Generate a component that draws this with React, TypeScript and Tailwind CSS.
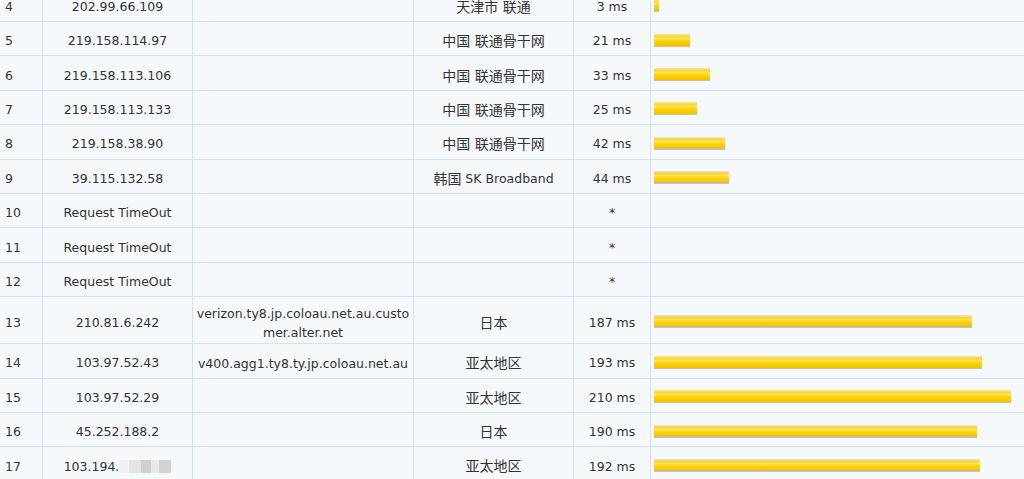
import React from "react";

type Seg = { t: string; cjk?: boolean };
type Row = {
  n: number;
  ip: string;
  blur?: boolean;
  host?: string;
  loc: Seg[];
  ms: number | null;
  tall?: boolean;
};

const rows: Row[] = [
  { n: 4, ip: "202.99.66.109", loc: [{ t: "天津市 联通", cjk: true }], ms: 3 },
  { n: 5, ip: "219.158.114.97", loc: [{ t: "中国 联通骨干网", cjk: true }], ms: 21 },
  { n: 6, ip: "219.158.113.106", loc: [{ t: "中国 联通骨干网", cjk: true }], ms: 33 },
  { n: 7, ip: "219.158.113.133", loc: [{ t: "中国 联通骨干网", cjk: true }], ms: 25 },
  { n: 8, ip: "219.158.38.90", loc: [{ t: "中国 联通骨干网", cjk: true }], ms: 42 },
  { n: 9, ip: "39.115.132.58", loc: [{ t: "韩国", cjk: true }, { t: " SK Broadband" }], ms: 44 },
  { n: 10, ip: "Request TimeOut", loc: [], ms: null },
  { n: 11, ip: "Request TimeOut", loc: [], ms: null },
  { n: 12, ip: "Request TimeOut", loc: [], ms: null },
  {
    n: 13,
    ip: "210.81.6.242",
    host: "verizon.ty8.jp.coloau.net.au.customer.alter.net",
    loc: [{ t: "日本", cjk: true }],
    ms: 187,
    tall: true,
  },
  {
    n: 14,
    ip: "103.97.52.43",
    host: "v400.agg1.ty8.ty.jp.coloau.net.au",
    loc: [{ t: "亚太地区", cjk: true }],
    ms: 193,
  },
  { n: 15, ip: "103.97.52.29", loc: [{ t: "亚太地区", cjk: true }], ms: 210 },
  { n: 16, ip: "45.252.188.2", loc: [{ t: "日本", cjk: true }], ms: 190 },
  { n: 17, ip: "103.194.", blur: true, loc: [{ t: "亚太地区", cjk: true }], ms: 192 },
];

function Mosaic() {
  return (
    <span className="inline-flex h-[13px] align-middle">
      <span className="w-[10px] bg-[#f1f1f1]" />
      <span className="w-[12px] bg-[#e4e4e4]" />
      <span className="w-[10px] bg-[#cfcfcf]" />
      <span className="w-[8px] bg-[#e8e8e8]" />
      <span className="w-[12px] bg-[#d2d2d2]" />
    </span>
  );
}

function Bar({ ms }: { ms: number }) {
  return (
    <div
      className="h-[13px] bg-[linear-gradient(to_bottom,#ffe788_0%,#ffd52a_20%,#ffe35c_35%,#ffd000_55%,#f8c600_82%,#bdb59c_84%,#cbc6b4_100%)]"
      style={{ width: `${Math.round(ms * 1.7)}px` }}
    />
  );
}

export default function App() {
  return (
    <div
      className="w-[1024px] h-[479px] overflow-hidden bg-[#f5f9fc] text-[#333] text-[12.5px]"
      style={{ fontFamily: '"DejaVu Sans", "Noto Sans CJK SC", sans-serif' }}
    >
      <div className="-mt-[12.4px] w-[1100px]">
        {rows.map((r) => (
          <div
            key={r.n}
            className={`flex border-b border-[#d5e1ef] box-border ${
              r.tall ? "h-[47px]" : "h-[34.4px]"
            }`}
          >
            <div className="w-[43px] shrink-0 border-r border-[#d5e1ef] flex items-center pl-[5px] pt-[6px]">
              {r.n}
            </div>
            <div className="w-[150px] shrink-0 border-r border-[#d5e1ef] flex items-center justify-center pt-[6px] whitespace-nowrap">
              {r.ip}
              {r.blur && <Mosaic />}
            </div>
            <div className="w-[221px] shrink-0 border-r border-[#d5e1ef] flex items-center justify-center px-[2px] pt-[6px] text-center break-all leading-[19px]">
              {r.host ?? ""}
            </div>
            <div className="w-[160px] shrink-0 border-r border-[#d5e1ef] flex items-center justify-center pt-[6px] whitespace-nowrap">
              {r.loc.map((s, i) =>
                s.cjk ? (
                  <span key={i} className="text-[14px]">
                    {s.t}
                  </span>
                ) : (
                  <span key={i} className="whitespace-pre">
                    {s.t}
                  </span>
                )
              )}
            </div>
            <div className="w-[77px] shrink-0 border-r border-[#d5e1ef] flex items-center justify-center pt-[6px] whitespace-nowrap">
              {r.ms === null ? "*" : `${r.ms} ms`}
            </div>
            <div className="flex-1 flex items-center pl-[3px] pt-[3px]">
              {r.ms !== null && <Bar ms={r.ms} />}
            </div>
          </div>
        ))}
      </div>
    </div>
  );
}
